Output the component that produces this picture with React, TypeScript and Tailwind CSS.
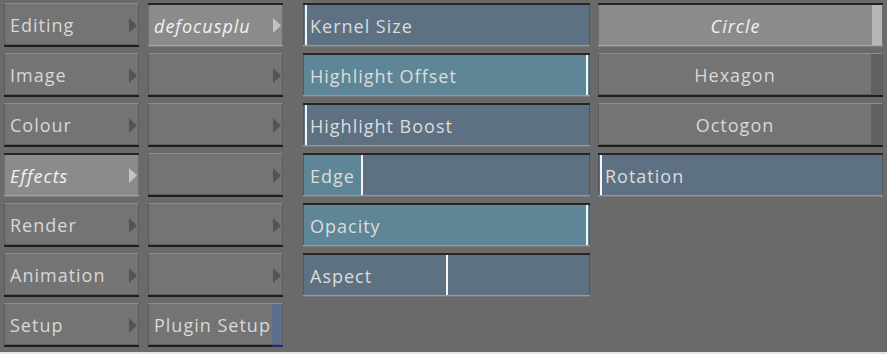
import React from "react";

const FONT = { fontFamily: '"Open Sans", "DejaVu Sans", sans-serif' };

function Arrow({ light }: { light?: boolean }) {
  return (
    <svg width="8" height="15" viewBox="0 0 8 15" className="shrink-0">
      <polygon points="0,0 8,7.5 0,15" fill={light ? "#c4c4c4" : "#545454"} />
    </svg>
  );
}

type BtnProps = {
  label?: string;
  selected?: boolean;
  arrow?: boolean;
  center?: boolean;
  strip?: "light" | "dark" | "blue";
};

function Btn({ label = "", selected, arrow = true, center, strip }: BtnProps) {
  if (selected) {
    return (
      <div className="flex h-[44px] flex-col">
        <div className="h-[2px] bg-[#242424]" />
        <div className="flex h-[40px] items-center border-x border-[#6e6e6e] bg-[#8b8b8b]">
          <span
            className={`flex-1 pt-[2px] italic text-[18px] tracking-[1px] text-[#f2f2f2] ${center ? "text-center" : "pl-[5px]"}`}
            style={FONT}
          >
            {label}
          </span>
          {arrow && (
            <span className="pr-[1px] pt-[1px]">
              <Arrow light />
            </span>
          )}
          {strip === "light" && <div className="h-full w-[10px] bg-[#b6b6b6]" />}
        </div>
        <div className="h-[1px] bg-[#a6a6a6]" />
        <div className="h-[1px] bg-[#7c7c7c]" />
      </div>
    );
  }
  return (
    <div className="flex h-[44px] flex-col">
      <div className="flex h-[42px] items-stretch border-t border-[#8c8c8c] border-x border-x-[#5c5c5c] border-b border-b-[#5e5e5e] bg-[#747474]">
        <span
          className={`flex flex-1 items-center pt-[2px] text-[18px] tracking-[1px] text-[#d8d8d8] ${center ? "justify-center" : "pl-[5px]"}`}
          style={FONT}
        >
          {label}
        </span>
        {arrow && (
          <span className="flex items-center pr-[1px] pt-[2px]">
            <Arrow />
          </span>
        )}
        {strip === "dark" && <div className="w-[11px] bg-[#606060]" />}
        {strip === "blue" && <div className="w-[10px] bg-[#5b6f8c]" />}
      </div>
      {strip === "blue" ? (
        <div className="flex h-[2px]">
          <div className="flex-1 bg-[#1e1e1e]" />
          <div className="w-[11px] bg-[#1c2a86]" />
        </div>
      ) : (
        <div className="h-[2px] bg-[#1e1e1e]" />
      )}
    </div>
  );
}

type FieldProps = {
  label: string;
  fill?: number;
  line: number;
  full?: boolean;
};

function Field({ label, fill = 0, line, full }: FieldProps) {
  return (
    <div className="flex h-[44px] flex-col">
      <div className="h-[2px] bg-[#262626]" />
      <div
        className={`relative flex h-[40px] items-center border-x border-[#4d5a66] ${full ? "bg-[#5e8696]" : "bg-[#5e7183]"}`}
      >
        {fill > 0 && (
          <div className="absolute left-0 top-0 h-full bg-[#5e8696]" style={{ width: fill }} />
        )}
        <div className="absolute top-0 h-full w-[2px] bg-[#f4f4f4]" style={{ left: line }} />
        <span className="relative pl-[6px] pt-[2px] text-[18px] tracking-[1px] text-[#dcdcdc]" style={FONT}>
          {label}
        </span>
      </div>
      <div className="h-[1px] bg-[#8d9cab]" />
      <div className="h-[1px] bg-[#7c7c7c]" />
    </div>
  );
}

export default function App() {
  return (
    <div className="flex h-[354px] w-[887px] flex-col bg-[#6a6a6a]">
      <div className="flex flex-1 pl-[4px] pt-[3px]">
        <div className="flex w-[135px] flex-col gap-[6px]">
          <Btn label="Editing" />
          <Btn label="Image" />
          <Btn label="Colour" />
          <Btn label="Effects" selected />
          <Btn label="Render" />
          <Btn label="Animation" />
          <Btn label="Setup" />
        </div>
        <div className="ml-[9px] flex w-[135px] flex-col gap-[6px]">
          <Btn label="defocusplu" selected />
          <Btn />
          <Btn />
          <Btn />
          <Btn />
          <Btn />
          <Btn label="Plugin Setup" arrow={false} strip="blue" />
        </div>
        <div className="ml-[20px] flex w-[287px] flex-col gap-[6px]">
          <Field label="Kernel Size" line={1} />
          <Field label="Highlight Offset" line={282} full />
          <Field label="Highlight Boost" line={1} />
          <Field label="Edge" fill={57} line={57} />
          <Field label="Opacity" line={282} full />
          <Field label="Aspect" line={142} />
        </div>
        <div className="ml-[8px] flex w-[285px] flex-col gap-[6px]">
          <Btn label="Circle" selected arrow={false} center strip="light" />
          <Btn label="Hexagon" arrow={false} center strip="dark" />
          <Btn label="Octogon" arrow={false} center strip="dark" />
          <Field label="Rotation" line={1} />
        </div>
      </div>
      <div className="h-[2px] bg-[#e4e4e4]" />
    </div>
  );
}
